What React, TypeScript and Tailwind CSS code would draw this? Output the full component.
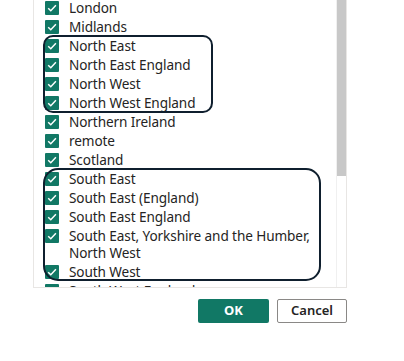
const items = [
  "London",
  "Midlands",
  "North East",
  "North East England",
  "North West",
  "North West England",
  "Northern Ireland",
  "remote",
  "Scotland",
  "South East",
  "South East (England)",
  "South East England",
  "South East, Yorkshire and the Humber, North West",
  "South West",
  "South West England",
];

const Check = () => (
  <div className="mt-[2px] w-[14px] h-[14px] shrink-0 bg-[#117865] rounded-[1px] flex items-center justify-center">
    <svg width="12" height="12" viewBox="0 0 12 12" fill="none">
      <path d="M2.2 6.2 L4.8 8.7 L9.9 3.3" stroke="white" strokeWidth="1.5" />
    </svg>
  </div>
);

const App = () => {
  return (
    <div
      className="relative w-[404px] h-[361px] bg-white overflow-hidden"
      style={{ fontFamily: '"Noto Sans", "Open Sans", sans-serif' }}
    >
      <div className="ml-[33px] w-[314px] h-[288px] border-x border-b border-[#e8e6e4] flex overflow-hidden">
        <div className="flex-1 flex flex-col -mt-[2px] pl-[11px]">
          {items.map((item) => (
            <div key={item} className="flex items-start gap-[10px] py-[1px]">
              <Check />
              <span className="text-[13.6px] tracking-[-0.1px] leading-[17px] text-[#252423] w-[250px]">
                {item}
              </span>
            </div>
          ))}
        </div>
        <div className="w-[10px] shrink-0 flex flex-col border-l border-[#f0f0f0]">
          <div className="h-[176px] bg-[#c8c8c8]" />
          <div className="flex-1 bg-white" />
        </div>
      </div>

      <div className="flex justify-end gap-2 mt-[11px] pr-[57px]">
        <button className="w-[71px] h-[24px] rounded-[2px] bg-[#117865] text-white text-[13px] font-bold">
          OK
        </button>
        <button className="w-[70px] h-[24px] rounded-[2px] bg-white border border-[#8a8886] text-[#252423] text-[13px] font-semibold">
          Cancel
        </button>
      </div>

      <div className="absolute left-[43px] top-[35px] w-[170px] h-[78px] border-2 border-[#0f1f2e] rounded-[10px] pointer-events-none" />
      <div className="absolute left-[43px] top-[168px] w-[278px] h-[113px] border-2 border-[#0f1f2e] rounded-[15px] pointer-events-none" />
    </div>
  );
};

export default App;
